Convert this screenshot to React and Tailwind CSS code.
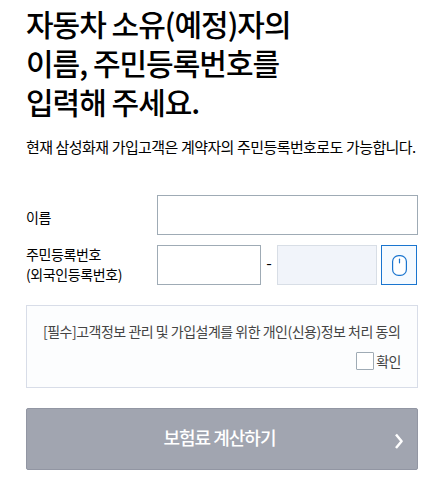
function MouseIcon() {
  return (
    <svg width="16" height="22" viewBox="0 0 16 22" fill="none" stroke="#1a75cf">
      <rect x="1.6" y="1.6" width="13.8" height="19.8" rx="6" fill="#fff" strokeWidth="1.2" />
      <path d="M8.5 5.2v3.6" strokeWidth="1.2" strokeLinecap="round" />
    </svg>
  );
}

function Chevron() {
  return (
    <svg width="10" height="16" viewBox="0 0 10 16" fill="none" stroke="#fff" strokeWidth="2.5">
      <path d="M2 1.5L7.6 8.3L2 15" strokeLinejoin="round" />
    </svg>
  );
}

export default function App() {
  return (
    <main className="h-[491px] w-[432px] overflow-hidden bg-white pl-[26px] font-['Noto_Sans_CJK_KR',sans-serif] text-black">
      <div className="w-[392px] pt-1">
        <h1 className="text-[30px] leading-[39px] font-medium tracking-[-1px] whitespace-nowrap">
          자동차 소유(예정)자의
          <br />
          이름, 주민등록번호를
          <br />
          입력해 주세요.
        </h1>
        <p className="mt-[15px] text-[15px] leading-[22px] tracking-[-0.58px] whitespace-nowrap [word-spacing:0.4px]">
          현재 삼성화재 가입고객은 계약자의 주민등록번호로도 가능합니다.
        </p>

        <div className="mt-[37px] flex h-10">
          <label htmlFor="name" className="w-[131px] pt-3 text-[14px] leading-5 tracking-[-0.4px]">
            이름
          </label>
          <input id="name" className="h-10 w-[261px] border border-[#9fabb5] bg-white px-2 outline-none" />
        </div>

        <div className="mt-[10px] flex h-10">
          <label htmlFor="rrn" className="-mt-px w-[131px] text-[14px] leading-5 tracking-[-0.4px] whitespace-nowrap">
            주민등록번호
            <br />
            (외국인등록번호)
          </label>
          <input id="rrn" className="h-10 w-[104px] border border-[#9fabb5] bg-white px-2 outline-none" />
          <span className="w-4 text-center text-[16px] leading-[35px]">-</span>
          <input disabled aria-label="뒷자리" className="h-10 w-[100px] border border-[#d8dee6] bg-[#f1f4fa]" />
          <button aria-label="마우스 입력" className="ml-1 flex h-10 w-9 items-center justify-center border border-[#1a75cf] bg-[#f5faff]">
            <MouseIcon />
          </button>
        </div>

        <section className="mt-5 h-[83px] border border-[#d8dde8] bg-[#fcfdfe] px-4 pt-[14px] text-[#444]">
          <p className="text-[14px] leading-[22px] tracking-[-0.5px] whitespace-nowrap">
            [필수]고객정보 관리 및 가입설계를 위한 개인(신용)정보 처리 동의
          </p>
          <label className="mt-2 flex items-center justify-end text-[14px] leading-[22px] tracking-[-0.5px]">
            <input type="checkbox" className="mr-[2px] size-[18px] appearance-none rounded-[1px] border border-[#9fabb5] bg-white" />
            확인
          </label>
        </section>

        <button className="mt-5 flex h-[62px] w-full items-center rounded-[2px] border border-[#9296a3] bg-[#a1a5b0] text-white">
          <span className="mb-1 ml-[32px] flex-1 pr-[14px] text-center text-[18px] leading-6 font-medium tracking-[-1px]">
            보험료 계산하기
          </span>
          <span className="mt-1 mr-[13px]">
            <Chevron />
          </span>
        </button>
      </div>
    </main>
  );
}
